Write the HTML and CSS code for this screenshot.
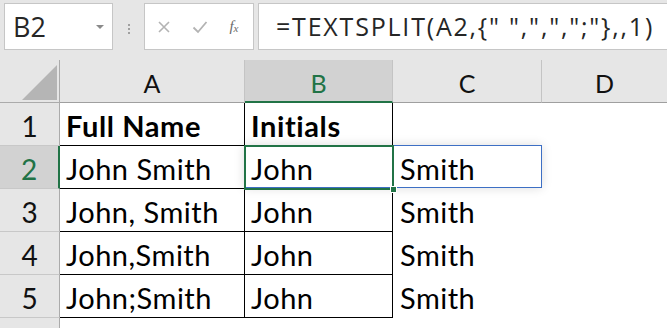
FILE: index.html
```html
<!DOCTYPE html>
<html lang="en">
<head>
  <meta charset="UTF-8">
  <title>TEXTSPLIT</title>
  <link rel="stylesheet" href="styles.css">
</head>
<body>
  <!-- 名称框 + 编辑栏 -->
  <div class="toolbar">
    <div class="namebox">
      <span>B2</span>
      <i class="caret"></i>
    </div>
    <div class="dots"><i></i><i></i><i></i></div>
    <div class="fx_box">
      <svg width="14" height="14" viewBox="0 0 14 14"><path d="M2 2 L12 12 M12 2 L2 12" stroke="#b3b3b3" stroke-width="1.6" fill="none"/></svg>
      <svg width="16" height="14" viewBox="0 0 16 14"><path d="M1.5 7.5 L6 12 L14.5 2" stroke="#b3b3b3" stroke-width="1.8" fill="none"/></svg>
      <span class="fx">f<sub>x</sub></span>
    </div>
    <div class="formula">=TEXTSPLIT(A2,{" ",",",";"},,1)</div>
  </div>

  <!-- 表格区域 -->
  <div class="sheet">
    <div class="corner"></div>
    <div class="col_head">A</div>
    <div class="col_head active">B</div>
    <div class="col_head">C</div>
    <div class="col_head last">D</div>

    <div class="row_head">1</div>
    <div class="cell bold">Full Name</div>
    <div class="cell bold">Initials</div>
    <div class="cell free"></div>
    <div class="cell free"></div>

    <div class="row_head active">2</div>
    <div class="cell">John Smith</div>
    <div class="cell selected">John
      <div class="spill"></div>
      <div class="select_box"><i class="handle"></i></div>
    </div>
    <div class="cell free">Smith</div>
    <div class="cell free"></div>

    <div class="row_head">3</div>
    <div class="cell">John, Smith</div>
    <div class="cell">John</div>
    <div class="cell free">Smith</div>
    <div class="cell free"></div>

    <div class="row_head">4</div>
    <div class="cell">John,Smith</div>
    <div class="cell">John</div>
    <div class="cell free">Smith</div>
    <div class="cell free"></div>

    <div class="row_head">5</div>
    <div class="cell">John;Smith</div>
    <div class="cell">John</div>
    <div class="cell free">Smith</div>
    <div class="cell free"></div>

    <div class="row_head"></div>
    <div class="cell free"></div>
    <div class="cell free"></div>
    <div class="cell free"></div>
    <div class="cell free"></div>
  </div>
</body>
</html>
```
FILE: styles.css
```css
*{
  margin: 0;
  padding: 0;
  box-sizing: border-box;
}
i{
  font-style: normal;
}
body{
  width: 667px;
  height: 328px;
  overflow: hidden;
  background-color: #fff;
  font-family: "Lato", "Open Sans", sans-serif;
  color: #000;
}

/* 顶部编辑栏 */
.toolbar{
  display: flex;
  align-items: flex-start;
  height: 60px;
  padding: 3px 0 0 4px;
  background-color: #e6e6e6;
}
.namebox{
  display: flex;
  align-items: center;
  justify-content: space-between;
  width: 109px;
  height: 47px;
  padding: 0 8px 0 8px;
  background-color: #fff;
  border: 1px solid #c6c6c6;
  font-family: "Open Sans", sans-serif;
  font-size: 27px;
  color: #262626;
}
.caret{
  width: 0;
  height: 0;
  border-left: 4px solid transparent;
  border-right: 4px solid transparent;
  border-top: 4px solid #8a8a8a;
}
.dots{
  display: flex;
  flex-direction: column;
  gap: 2px;
  width: 31px;
  padding-top: 21px;
  align-items: center;
}
.dots i{
  width: 2px;
  height: 2px;
  background-color: #a0a0a0;
}
.fx_box{
  display: flex;
  align-items: center;
  justify-content: space-around;
  width: 110px;
  height: 47px;
  padding: 0 4px 0 2px;
  background-color: #fff;
  border: 1px solid #c6c6c6;
}
.fx{
  font-family: "Liberation Serif", serif;
  font-style: italic;
  font-size: 15px;
  color: #6a6a6a;
}
.fx sub{
  font-size: 11px;
  vertical-align: -1px;
}
.formula{
  flex: 1;
  height: 47px;
  margin-left: 4px;
  padding-left: 17px;
  background-color: #fff;
  border: 1px solid #c6c6c6;
  border-right: 0;
  font-family: "Open Sans", sans-serif;
  font-size: 25px;
  letter-spacing: 1.8px;
  line-height: 44px;
  color: #262626;
  white-space: nowrap;
}

/* 表格 */
.sheet{
  display: grid;
  grid-template-columns: 60px 185px 148px 149px 125px;
  grid-auto-rows: 43px;
  height: 268px;
  overflow: hidden;
}
.corner{
  position: relative;
  background-color: #e6e6e6;
  border-right: 1px solid #ababab;
  border-bottom: 1px solid #ababab;
}
.corner::after{
  content: "";
  position: absolute;
  left: 22px;
  top: 5px;
  width: 35px;
  height: 35px;
  background-color: #b5b5b5;
  clip-path: polygon(100% 0, 100% 100%, 0 100%);
}
.col_head{
  display: flex;
  justify-content: center;
  align-items: center;
  background-color: #e6e6e6;
  border-right: 1px solid #c4c4c4;
  border-bottom: 1px solid #9f9f9f;
  font-size: 25px;
  padding-top: 4px;
  color: #111;
}
.col_head.last{
  border-right: 0;
}
.col_head.active{
  background-color: #d2d2d2;
  border-bottom: 2px solid #217346;
  color: #217346;
}
.row_head{
  display: flex;
  justify-content: center;
  align-items: center;
  background-color: #e6e6e6;
  border-right: 1px solid #ababab;
  border-bottom: 1px solid #c8c8c8;
  font-size: 28px;
  padding-top: 3px;
  color: #111;
}
.row_head.active{
  background-color: #d2d2d2;
  border-right: 2px solid #217346;
  color: #217346;
}
.cell{
  position: relative;
  padding: 6px 0 0 6px;
  border-right: 1px solid #000;
  border-bottom: 1px solid #000;
  font-size: 29px;
  letter-spacing: .5px;
  line-height: 34px;
  white-space: nowrap;
}
.cell.bold{
  font-weight: 700;
  letter-spacing: .6px;
}
.cell.free{
  border: 0;
  padding-left: 7px;
}

/* 选中框与溢出区域 */
.spill{
  position: absolute;
  top: -1px;
  left: -1px;
  width: 298px;
  height: 43px;
  border: 1px solid #3d6fc4;
  box-shadow: 0 0 10px rgba(0, 0, 0, .14);
  z-index: 1;
}
.select_box{
  position: absolute;
  top: -1px;
  left: -1px;
  width: 150px;
  height: 45px;
  border: 2px solid #217346;
  z-index: 2;
}
.handle{
  position: absolute;
  right: -5px;
  bottom: -5px;
  width: 7px;
  height: 7px;
  background-color: #217346;
  border: 1px solid #fff;
}
```
